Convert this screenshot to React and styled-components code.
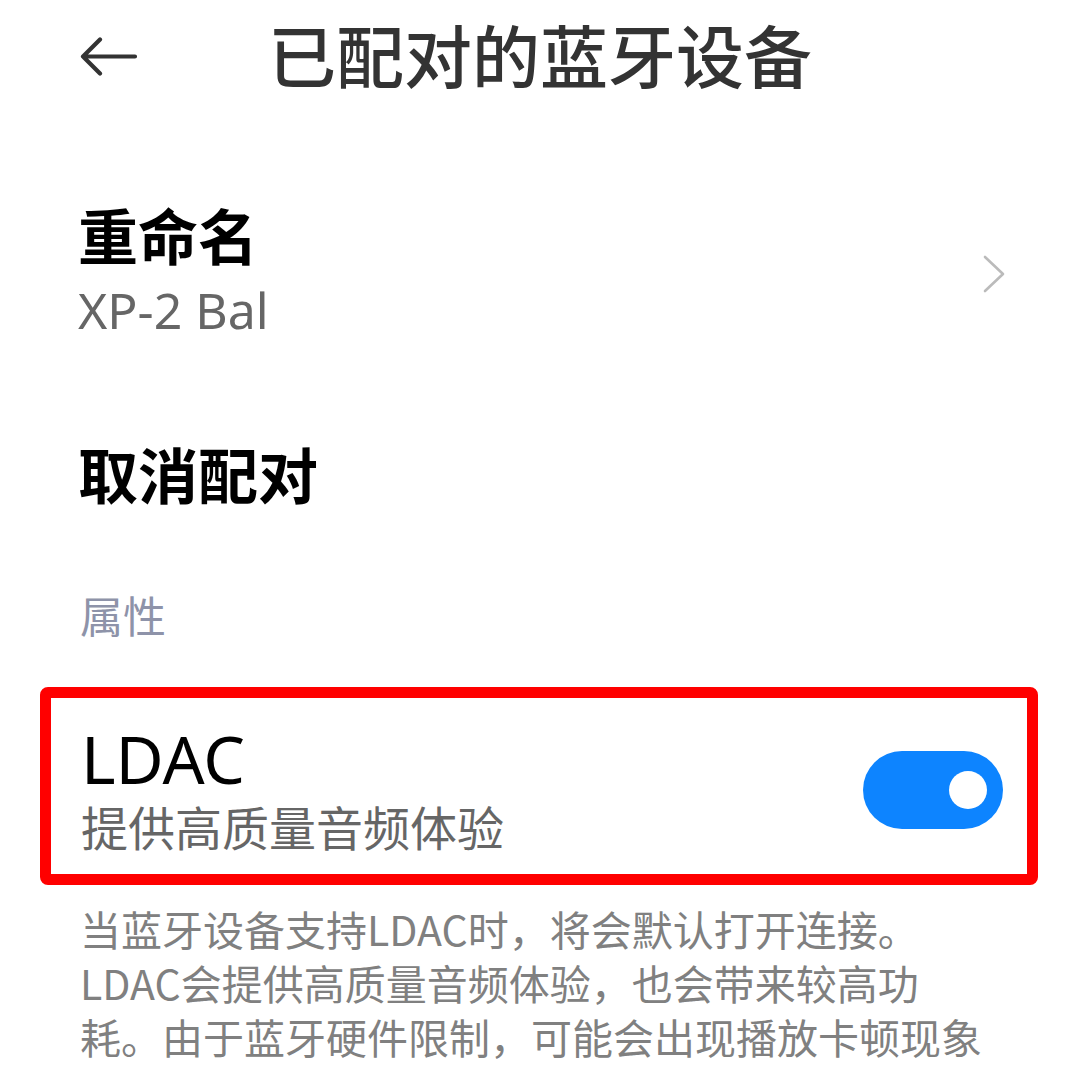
import React from "react";
import styled, { createGlobalStyle } from "styled-components";

const FONT = `"Noto Sans", "Noto Sans CJK SC", sans-serif`;
const CJK = `"Noto Sans CJK SC", "Noto Sans", sans-serif`;

const GlobalStyle = createGlobalStyle`
  html, body {
    margin: 0;
    padding: 0;
    background: #fff;
  }
  body {
    font-family: ${FONT};
    overflow: hidden;
  }
`;

const Page = styled.div`
  width: 1080px;
  height: 1090px;
  overflow: hidden;
  background: #fff;
`;

const Header = styled.header`
  display: flex;
  align-items: center;
  height: 108px;
  padding-left: 80px;
`;

const BackButton = styled.button`
  display: flex;
  align-items: center;
  padding: 0;
  border: 0;
  background: none;
  width: 60px;
  height: 40px;
  margin-top: 6px;
  color: #333;
`;

const Title = styled.h1`
  margin: 0 0 0 128px;
  font-family: ${CJK};
  font-size: 68px;
  font-weight: 500;
  line-height: 1;
  color: #333;
`;

const Row = styled.div`
  display: flex;
  align-items: center;
  justify-content: space-between;
  padding: ${(p) => p.$pad || "0"};
`;

const RowText = styled.div`
  display: flex;
  flex-direction: column;
`;

const RowTitle = styled.div`
  font-family: ${(p) => (p.$latin ? FONT : CJK)};
  font-size: ${(p) => p.$size || 60}px;
  font-weight: ${(p) => (p.$bold ? 700 : 400)};
  line-height: ${(p) => p.$lh || 70}px;
  color: #000;
`;

const RowSub = styled.div`
  font-family: ${(p) => (p.$latin ? FONT : CJK)};
  font-size: ${(p) => p.$size || 48}px;
  line-height: ${(p) => p.$lh || 60}px;
  color: #666;
  margin-top: ${(p) => p.$gap || 0}px;
`;

const Chevron = styled.svg`
  width: 24px;
  height: 40px;
  margin-right: 74px;
  margin-top: 10px;
`;

const SectionLabel = styled.div`
  font-family: ${CJK};
  font-size: 43px;
  line-height: 50px;
  color: #8e93a9;
`;

const Highlight = styled.div`
  margin: 48px 42px 0 40px;
  border: 11px solid #ff0000;
  border-radius: 8px;
  padding: 24px 24px 16px 30px;
  display: flex;
  align-items: center;
  justify-content: space-between;
`;

const Toggle = styled.div`
  position: relative;
  width: 140px;
  height: 78px;
  border-radius: 39px;
  background: ${(p) => (p.$on ? "#0d84ff" : "#d9d9d9")};
  flex-shrink: 0;
  margin-top: 0;
`;

const Knob = styled.span`
  position: absolute;
  top: 20px;
  right: 16px;
  width: 38px;
  height: 38px;
  border-radius: 50%;
  background: #fff;
`;

const Footnote = styled.p`
  margin: 16px 0 0 80px;
  font-family: ${CJK};
  font-size: 41px;
  line-height: 54px;
  color: #808080;
  white-space: nowrap;
`;

export default function App() {
  return (
    <Page>
      <GlobalStyle />
      <Header>
        <BackButton aria-label="back">
          <svg width="58" height="40" viewBox="0 0 58 40" fill="none">
            <path
              d="M3 19.5 H55 M20 2.5 L3 19.5 L20 36.5"
              stroke="#333"
              strokeWidth="4.2"
              strokeLinecap="round"
              strokeLinejoin="round"
            />
          </svg>
        </BackButton>
        <Title>已配对的蓝牙设备</Title>
      </Header>

      <Row $pad="91px 0 0 78px">
        <RowText>
          <RowTitle $bold>重命名</RowTitle>
          <RowSub $latin $size={50} $lh={62} $gap={10}>XP-2 Bal</RowSub>
        </RowText>
        <Chevron viewBox="0 0 24 40" fill="none">
          <path
            d="M3 2 L21 19 L3 36"
            stroke="#bbbbbb"
            strokeWidth="2.6"
            strokeLinecap="round"
            strokeLinejoin="round"
          />
        </Chevron>
      </Row>

      <Row $pad="97px 0 0 78px">
        <RowTitle $bold>取消配对</RowTitle>
      </Row>

      <Row $pad="81px 0 0 80px">
        <SectionLabel>属性</SectionLabel>
      </Row>

      <Highlight>
        <RowText>
          <RowTitle $latin $size={66} $lh={72}>LDAC</RowTitle>
          <RowSub $size={47} $lh={64}>提供高质量音频体验</RowSub>
        </RowText>
        <Toggle $on>
          <Knob />
        </Toggle>
      </Highlight>

      <Footnote>
        当蓝牙设备支持LDAC时，将会默认打开连接。
        <br />
        LDAC会提供高质量音频体验，也会带来较高功
        <br />
        耗。由于蓝牙硬件限制，可能会出现播放卡顿现象
      </Footnote>
    </Page>
  );
}
